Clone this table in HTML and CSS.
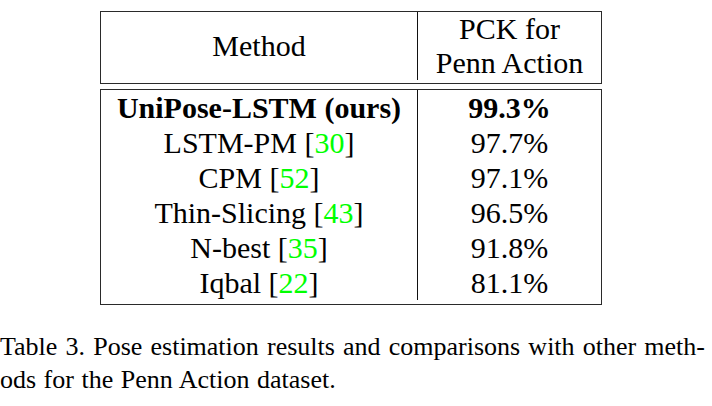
FILE: index.html
```html
<!DOCTYPE html>
<html>
<head>
<meta charset="utf-8">
<link rel="stylesheet" href="styles.css">
</head>
<body>
<div class="page">
  <div class="figure">
    <div class="tbl head">
      <div class="cell left method">Method</div>
      <div class="cell">PCK for<br>Penn Action</div>
    </div>
    <div class="tbl body">
      <div class="cell left bold">UniPose-LSTM (ours)</div>
      <div class="cell bold">99.3%</div>
      <div class="cell left">LSTM-PM [<span class="cite">30</span>]</div>
      <div class="cell">97.7%</div>
      <div class="cell left">CPM [<span class="cite">52</span>]</div>
      <div class="cell">97.1%</div>
      <div class="cell left">Thin-Slicing [<span class="cite">43</span>]</div>
      <div class="cell">96.5%</div>
      <div class="cell left">N-best [<span class="cite">35</span>]</div>
      <div class="cell">91.8%</div>
      <div class="cell left">Iqbal [<span class="cite">22</span>]</div>
      <div class="cell">81.1%</div>
    </div>
  </div>
  <p class="caption"><span class="line1">Table 3. Pose estimation results and comparisons with other meth-</span><span class="line2">ods for the Penn Action dataset.</span></p>
</div>
</body>
</html>
```
FILE: styles.css
```css
html, body {
  margin: 0;
  padding: 0;
  background: #ffffff;
}
body {
  font-family: "Liberation Serif", "Times New Roman", serif;
  color: #000000;
}
.page {
  width: 712px;
  padding-top: 11px;
}
.figure {
  width: 702px;
  display: flex;
  flex-direction: column;
  align-items: center;
}
.tbl {
  display: grid;
  grid-template-columns: 317px 183px;
  border: 1px solid #2a2a2a;
  font-size: 30px;
}
.cell {
  text-align: center;
  box-sizing: border-box;
}
.cell.left {
  border-right: 1px solid #111111;
}
.head {
  line-height: 34px;
  padding-bottom: 3px;
}
.head .method {
  display: flex;
  align-items: center;
  justify-content: center;
}
.body {
  margin-top: 5px;
  line-height: 35px;
  padding-bottom: 4px;
}
.bold {
  font-weight: bold;
}
.cite {
  color: #00ff00;
}
.caption {
  margin: 25px 0 0 0;
  width: 705px;
  font-size: 26px;
  line-height: 33px;
}
.line1 {
  display: block;
  text-align: justify;
  text-align-last: justify;
}
.line2 {
  display: block;
  word-spacing: 1px;
}
```
